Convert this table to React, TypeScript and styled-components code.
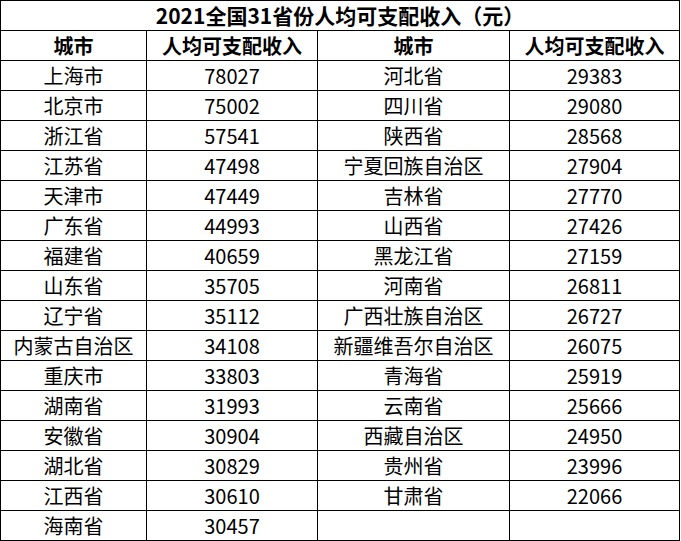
import styled, { createGlobalStyle } from "styled-components";

const GlobalStyle = createGlobalStyle`
  html, body {
    margin: 0;
    padding: 0;
    background: #ffffff;
  }
  body {
    font-family: "Noto Sans CJK SC", "Noto Sans", sans-serif;
    color: #000000;
  }
`;

const left: [string, number][] = [
  ["上海市", 78027],
  ["北京市", 75002],
  ["浙江省", 57541],
  ["江苏省", 47498],
  ["天津市", 47449],
  ["广东省", 44993],
  ["福建省", 40659],
  ["山东省", 35705],
  ["辽宁省", 35112],
  ["内蒙古自治区", 34108],
  ["重庆市", 33803],
  ["湖南省", 31993],
  ["安徽省", 30904],
  ["湖北省", 30829],
  ["江西省", 30610],
  ["海南省", 30457],
];

const right: [string, number][] = [
  ["河北省", 29383],
  ["四川省", 29080],
  ["陕西省", 28568],
  ["宁夏回族自治区", 27904],
  ["吉林省", 27770],
  ["山西省", 27426],
  ["黑龙江省", 27159],
  ["河南省", 26811],
  ["广西壮族自治区", 26727],
  ["新疆维吾尔自治区", 26075],
  ["青海省", 25919],
  ["云南省", 25666],
  ["西藏自治区", 24950],
  ["贵州省", 23996],
  ["甘肃省", 22066],
];

export default function App() {
  return (
    <>
      <GlobalStyle />
      <Table>
        <Title>2021全国31省份人均可支配收入（元）</Title>
        <Cell $bold>城市</Cell>
        <Cell $bold>人均可支配收入</Cell>
        <Cell $bold>城市</Cell>
        <Cell $bold>人均可支配收入</Cell>
        {left.map(([city, value], i) => {
          const r = right[i];
          return [
            <Cell key={`l${i}`}>{city}</Cell>,
            <Cell key={`lv${i}`}>{value}</Cell>,
            <Cell key={`r${i}`}>{r ? r[0] : ""}</Cell>,
            <Cell key={`rv${i}`}>{r ? r[1] : ""}</Cell>,
          ];
        })}
      </Table>
    </>
  );
}

const Table = styled.div`
  display: grid;
  grid-template-columns: 145px 170px 191px 169px;
  grid-auto-rows: 29px;
  gap: 1px;
  padding: 1px;
  width: 678px;
  background: #000000;
`;

const Cell = styled.div<{ $bold?: boolean }>`
  display: flex;
  align-items: center;
  justify-content: center;
  background: #ffffff;
  font-size: 20px;
  line-height: 29px;
  font-weight: ${(p) => (p.$bold ? 700 : 400)};
  white-space: nowrap;
`;

const Title = styled(Cell)`
  grid-column: 1 / -1;
  font-size: 21px;
  font-weight: 700;
`;
